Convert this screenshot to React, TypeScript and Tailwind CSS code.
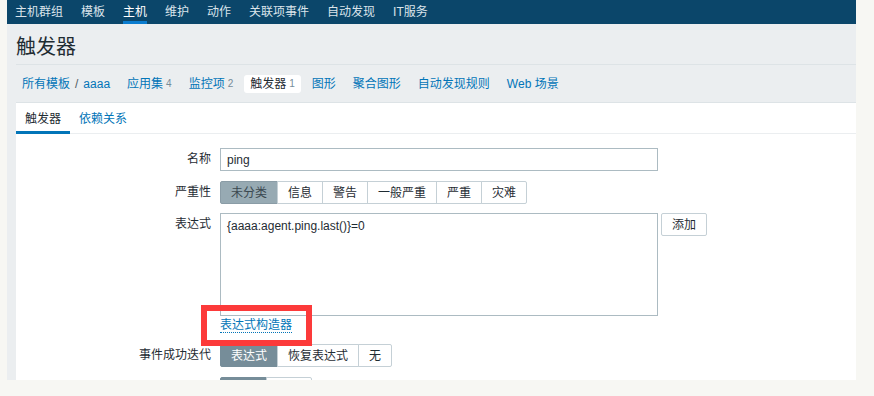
import { ReactNode } from "react";

const FONT = { fontFamily: '"Liberation Sans", "Noto Sans CJK SC", Arial, sans-serif' };

const menu = ["主机群组", "模板", "主机", "维护", "动作", "关联项事件", "自动发现", "IT服务"];

interface Crumb {
  label: string;
  count?: number;
  active?: boolean;
}

const crumbs: Crumb[] = [
  { label: "应用集", count: 4 },
  { label: "监控项", count: 2 },
  { label: "触发器", count: 1, active: true },
  { label: "图形" },
  { label: "聚合图形" },
  { label: "自动发现规则" },
  { label: "Web 场景" },
];

const TopNav = () => (
  <nav className="flex h-[26px] gap-[18px] bg-[#0b466a] pl-[8px] text-[12px]">
    {menu.map((item) => (
      <span
        key={item}
        className={
          item === "主机"
            ? "flex items-center border-b-[3px] border-[#0a7ccf] pt-[3px] text-white"
            : "flex items-center text-[#dbe4ea]"
        }
      >
        {item}
      </span>
    ))}
  </nav>
);

const Breadcrumbs = () => (
  <div className="flex h-[38px] items-center gap-[5px] border-b border-[#dde3e6] text-[12px]">
    <span className="px-[6px] text-[#0275b8]">
      所有模板<span className="mx-[5px] text-[#4f5b62]">/</span>aaaa
    </span>
    {crumbs.map((c) => (
      <span
        key={c.label}
        className={
          c.active
            ? "flex h-[18px] items-center rounded-[3px] bg-white px-[6px] text-[#1f2c33]"
            : "flex h-[18px] items-center px-[6px] text-[#0275b8]"
        }
      >
        {c.label}
        {c.count !== undefined && (
          <span className="ml-[3px] text-[10px] text-[#768d99]">{c.count}</span>
        )}
      </span>
    ))}
  </div>
);

interface SegmentedProps {
  options: string[];
  selected: number;
  selectedClass: string;
}

const Segmented = ({ options, selected, selectedClass }: SegmentedProps) => (
  <div className="flex h-[23px]">
    {options.map((opt, i) => (
      <span
        key={opt}
        className={
          (i === 0 ? "rounded-l-[2px] " : "-ml-px ") +
          (i === options.length - 1 ? "rounded-r-[2px] " : "") +
          "flex items-center border px-[10px] " +
          (i === selected ? selectedClass : "border-[#c5d0d6] bg-white text-[#1f2c33]")
        }
      >
        {opt}
      </span>
    ))}
  </div>
);

const Row = ({ label, children, className }: { label: string; children: ReactNode; className: string }) => (
  <div className={"flex items-start " + className}>
    <div className="w-[195px] text-right leading-[23px] text-[#1f2c33]">{label}</div>
    <div className="ml-[9px] flex items-start">{children}</div>
  </div>
);

const App = () => {
  return (
    <div className="relative h-[396px] w-[874px] overflow-hidden bg-[#f7f7f3]" style={FONT}>
      <div className="ml-[7px] flex h-[380px] w-[849px] flex-col overflow-hidden bg-[#ebeef0]">
        <TopNav />
        <div className="pl-[9px]">
          <div className="flex h-[41px] items-center border-b border-[#dde3e6] pt-[6px] text-[20px] text-[#1f2c33]">
            触发器
          </div>
          <Breadcrumbs />
          <div className="h-[300px] bg-white text-[12px]">
            <div className="flex border-b border-[#ebeef0]">
              <span className="-mb-px border-b-[3px] border-[#0275b8] px-[9px] pt-[9px] pb-[5px] leading-[14px] text-[#1f2c33]">
                触发器
              </span>
              <span className="-mb-px border-b-[3px] border-transparent px-[9px] pt-[9px] pb-[5px] leading-[14px] text-[#0275b8]">
                依赖关系
              </span>
            </div>

            <Row label="名称" className="mt-[14px]">
              <input
                readOnly
                value="ping"
                className="h-[23px] w-[438px] border border-[#acbbc2] px-[6px] text-[12px] text-[#1f2c33] outline-none"
              />
            </Row>

            <Row label="严重性" className="mt-[10px]">
              <Segmented
                options={["未分类", "信息", "警告", "一般严重", "严重", "灾难"]}
                selected={0}
                selectedClass="border-[#8a9ca6] bg-[#97aab3] text-[#3b4850]"
              />
            </Row>

            <Row label="表达式" className="mt-[9px]">
              <textarea
                readOnly
                value="{aaaa:agent.ping.last()}=0"
                className="h-[103px] w-[438px] resize-none border border-[#acbbc2] px-[6px] pt-[5px] text-[12px] leading-[14px] text-[#1f2c33] outline-none"
              />
              <button className="ml-[3px] h-[23px] w-[46px] rounded-[2px] border border-[#c5d0d6] bg-white text-[12px] text-[#1f2c33]">
                添加
              </button>
            </Row>

            <div className="mt-[2px] pl-[204px] leading-[14px]">
              <span className="border-b border-dotted border-[#0275b8] text-[#0275b8]">表达式构造器</span>
            </div>

            <Row label="事件成功迭代" className="mt-[12px]">
              <Segmented
                options={["表达式", "恢复表达式", "无"]}
                selected={0}
                selectedClass="border-[#768d99] bg-[#768d99] text-white"
              />
            </Row>

            {/* next row, only its top edge shows above the cut */}
            <div className="mt-[10px] flex h-[23px] pl-[204px]">
              <span className="w-[47px] rounded-l-[2px] border border-[#768d99] bg-[#768d99]" />
              <span className="-ml-px w-[46px] rounded-r-[2px] border border-[#c5d0d6] bg-white" />
            </div>
          </div>
        </div>
      </div>

      {/* red highlight drawn over the screenshot */}
      <div className="absolute left-[201px] top-[305px] h-[41px] w-[111px] border-[6px] border-[#fc3a3a]" />
    </div>
  );
};

export default App;
